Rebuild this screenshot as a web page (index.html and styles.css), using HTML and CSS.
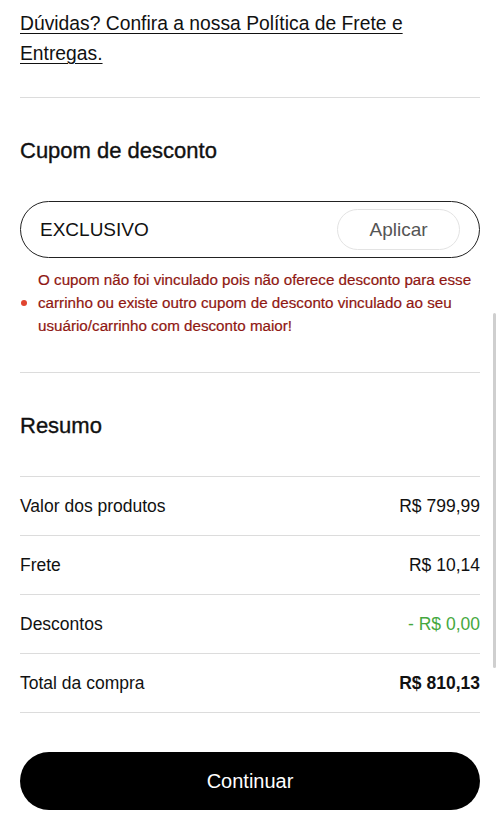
FILE: index.html
```html
<!DOCTYPE html>
<html lang="pt-BR">
<head>
  <meta charset="UTF-8">
  <meta name="viewport" content="width=device-width, initial-scale=1.0">
  <title>Carrinho – Resumo</title>
  <link rel="stylesheet" href="styles.css">
</head>
<body>
  <div class="page">
    <div class="faq">
      <a href="#">Dúvidas? Confira a nossa Política de Frete e Entregas.</a>
    </div>

    <div class="section coupon">
      <h2>Cupom de desconto</h2>
      <div class="coupon-field">
        <input type="text" value="EXCLUSIVO">
        <button class="apply">Aplicar</button>
      </div>
      <div class="error">
        <span class="dot"></span>
        <p>O cupom não foi vinculado pois não oferece desconto para esse carrinho ou existe outro cupom de desconto vinculado ao seu usuário/carrinho com desconto maior!</p>
      </div>
    </div>

    <div class="section summary">
      <h2>Resumo</h2>
      <div class="row"><span>Valor dos produtos</span><span>R$ 799,99</span></div>
      <div class="row"><span>Frete</span><span>R$ 10,14</span></div>
      <div class="row"><span>Descontos</span><span class="green">- R$ 0,00</span></div>
      <div class="row"><span>Total da compra</span><span class="bold">R$ 810,13</span></div>
    </div>

    <button class="continue">Continuar</button>
  </div>

  <div class="scrollbar"></div>
</body>
</html>
```

FILE: styles.css
```css
body {
  margin: 0;
  font-family: "Liberation Sans", Arial, sans-serif;
  color: #111;
  background: #fff;
}
.page {
  padding: 0 20px;
}
.faq {
  padding: 9px 0 28px;
  font-size: 19.3px;
  line-height: 30px;
}
.faq a {
  color: #111;
  text-decoration: underline;
  text-underline-offset: 3px;
  text-decoration-thickness: 1px;
}
.section {
  border-top: 1px solid #dcdcdc;
}
h2 {
  margin: 0;
  font-size: 22px;
  line-height: 28px;
  font-weight: normal;
  -webkit-text-stroke: 0.35px #111;
}
.coupon {
  padding: 39px 0 35px;
}
.coupon-field {
  margin-top: 36px;
  height: 57px;
  box-sizing: border-box;
  border: 1.5px solid #222;
  border-radius: 30px;
  display: flex;
  align-items: center;
  padding: 0 19px 0 19px;
}
.coupon-field input {
  flex: 1;
  min-width: 0;
  border: none;
  outline: none;
  font-family: inherit;
  font-size: 19px;
  color: #111;
  padding: 0;
  background: transparent;
}
.apply {
  width: 123px;
  height: 41px;
  border: 1px solid #e3e3e3;
  border-radius: 21px;
  background: #fff;
  color: #555;
  font-family: inherit;
  font-size: 19px;
}
.error {
  margin-top: 10px;
  display: flex;
  align-items: center;
}
.dot {
  width: 6px;
  height: 6px;
  border-radius: 50%;
  background: #e0442f;
  margin: 0 11px 0 1px;
  flex-shrink: 0;
}
.error p {
  margin: 0;
  color: #8f1712;
  font-size: 15.2px;
  line-height: 23px;
  -webkit-text-stroke: 0.2px #8f1712;
}
.summary {
  padding-top: 39px;
}
.summary h2 {
  margin-bottom: 36px;
}
.row {
  display: flex;
  justify-content: space-between;
  align-items: center;
  height: 58px;
  border-top: 1px solid #dcdcdc;
  font-size: 17.5px;
}
.row:last-child {
  border-bottom: 1px solid #dcdcdc;
}
.green {
  color: #45a83e;
}
.bold {
  font-weight: bold;
}
.continue {
  display: block;
  width: 100%;
  height: 58px;
  margin-top: 39px;
  border: none;
  border-radius: 29px;
  background: #000;
  color: #fff;
  font-family: inherit;
  font-size: 20px;
}
.scrollbar {
  position: fixed;
  right: 4px;
  top: 313px;
  width: 3px;
  height: 355px;
  border-radius: 2px;
  background: #cfcfcf;
}
```
